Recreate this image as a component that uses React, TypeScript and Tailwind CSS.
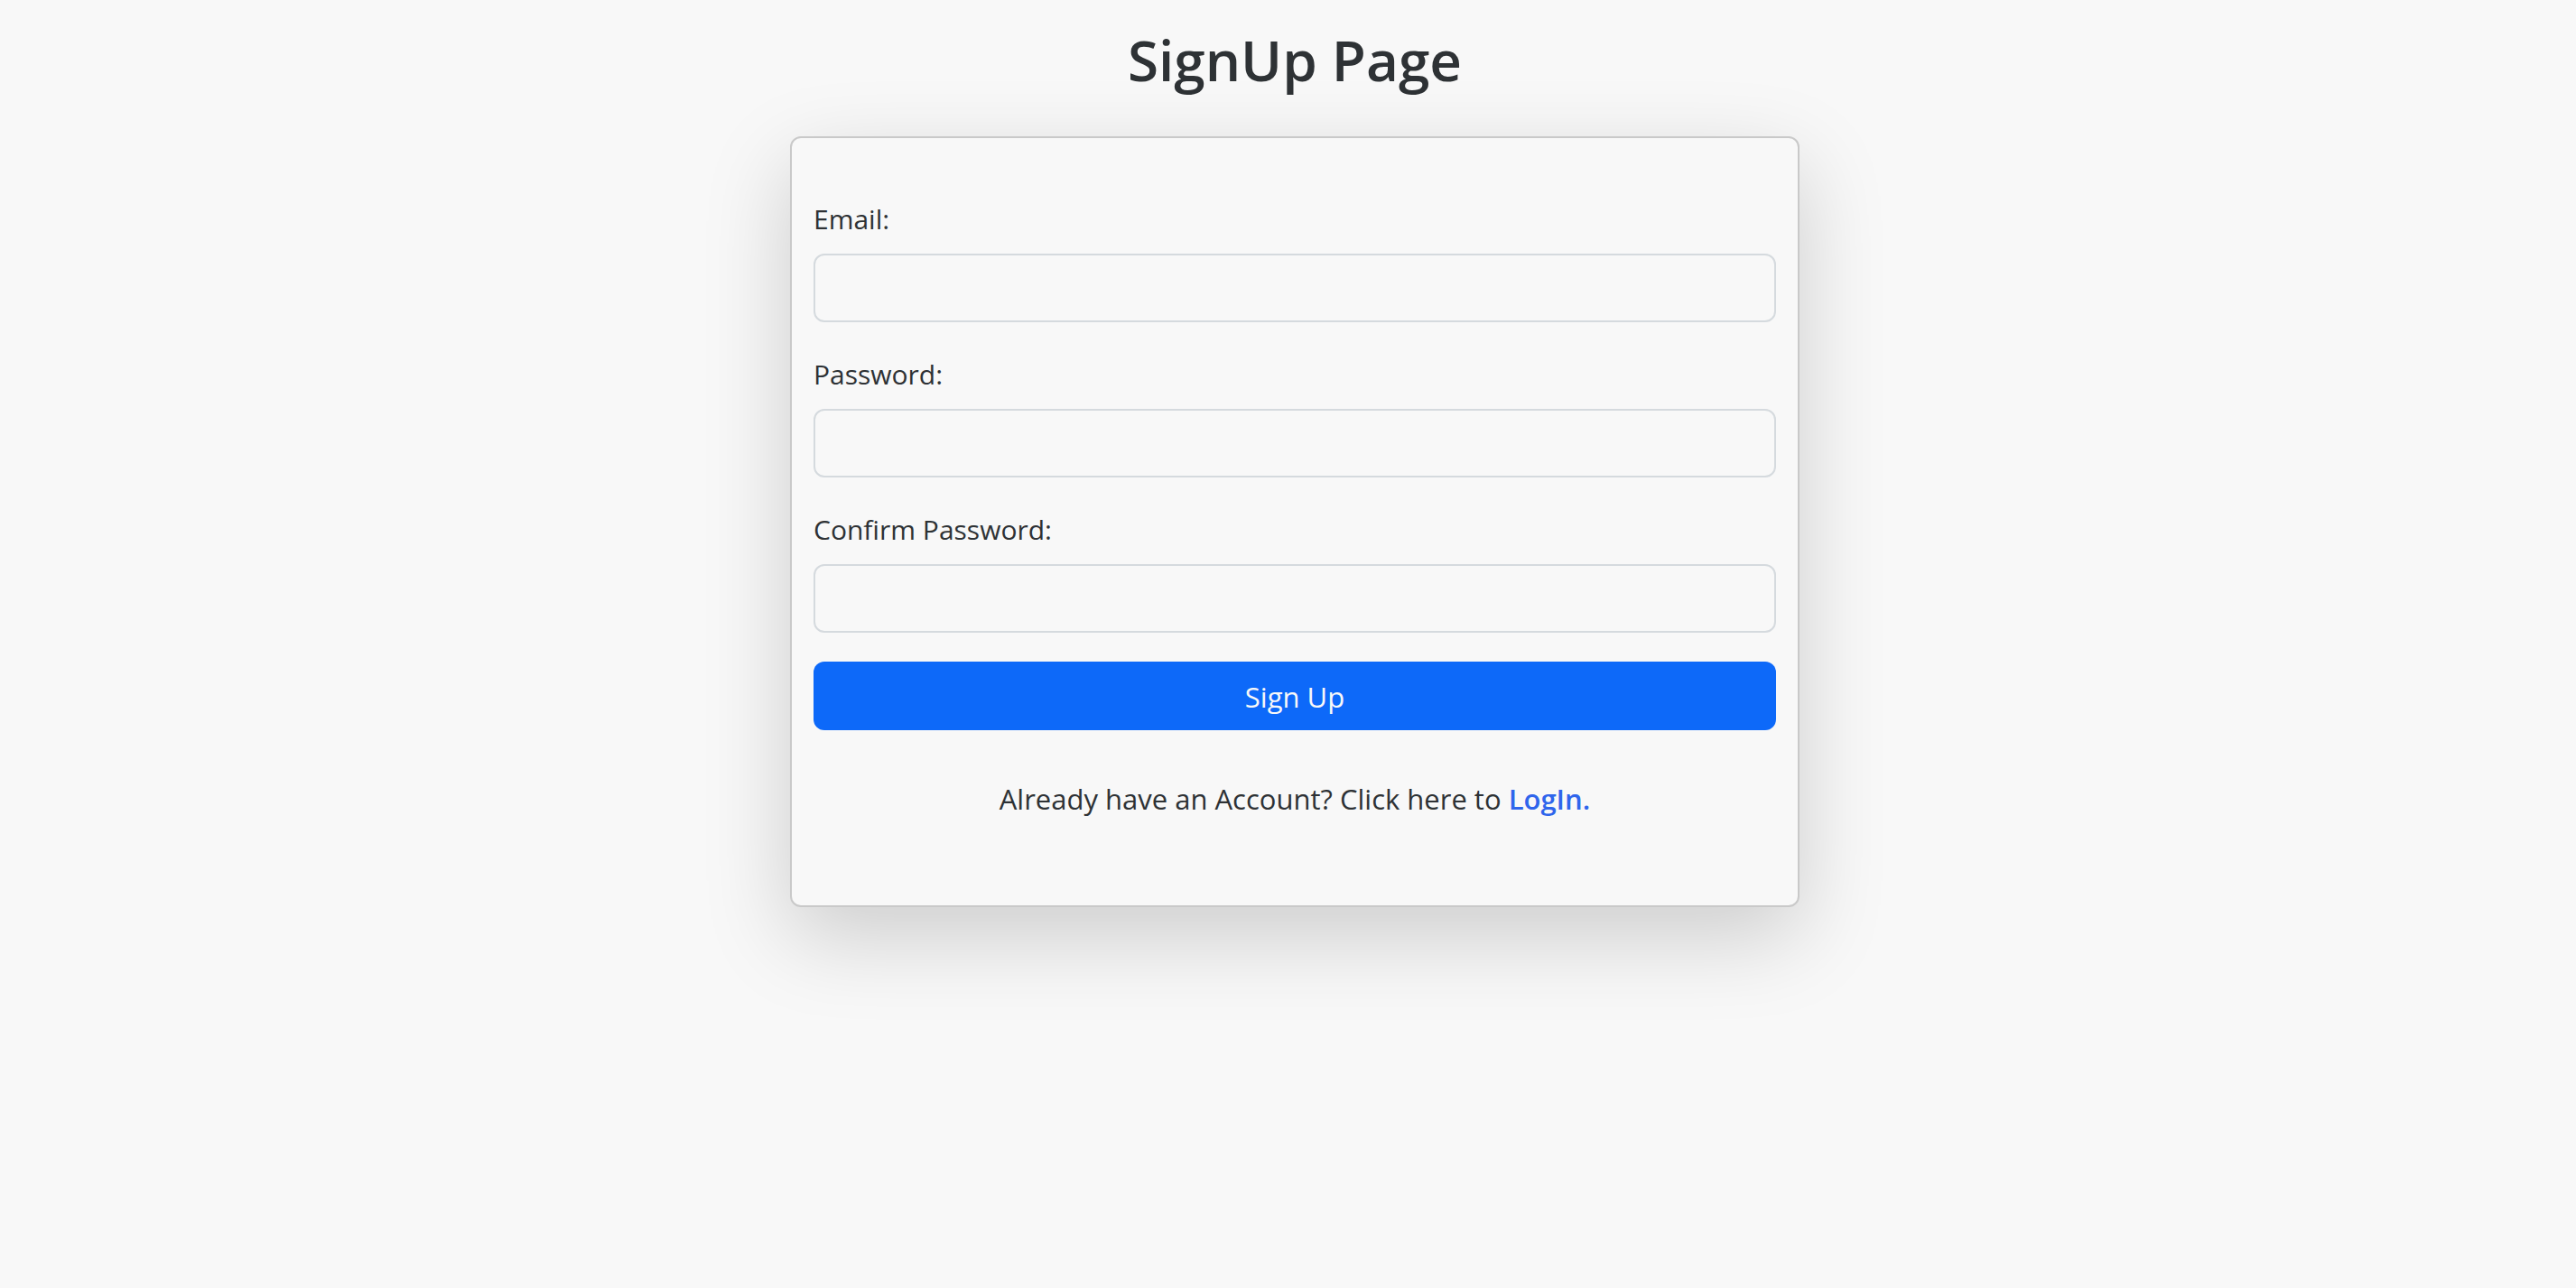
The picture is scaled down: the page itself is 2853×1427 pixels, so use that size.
const fields = [
  { id: "email", label: "Email:", type: "email" },
  { id: "password", label: "Password:", type: "password" },
  { id: "confirm-password", label: "Confirm Password:", type: "password" },
];

export default function App() {
  return (
    <main className="flex min-h-screen flex-col items-center bg-[#f8f8f8] pl-[15px] font-['Open_Sans',sans-serif] text-[31px] leading-12 text-[#2e3235]">
      <h1 className="mt-[26px] mb-[45px] text-[62px] leading-20 font-semibold">SignUp Page</h1>
      <form
        className="w-full max-w-[1118px] rounded-xl border-2 border-[#c9c9c9] bg-[#f8f8f8] px-6 pt-[66px] pb-[94px] shadow-[0_32px_96px_rgba(0,0,0,0.175)]"
        onSubmit={(event) => event.preventDefault()}
      >
        {fields.map((field, index) => (
          <div key={field.id} className={index < fields.length - 1 ? "mb-[34px]" : "mb-8"}>
            <label htmlFor={field.id} className="mb-[14px] block text-[30px]">
              {field.label}
            </label>
            <input
              id={field.id}
              type={field.type}
              className="block h-19 w-full rounded-xl border-2 border-[#d5dade] bg-transparent px-6"
            />
          </div>
        ))}
        <button type="submit" className="block h-19 w-full rounded-xl bg-[#0d69f9] pt-0.5 text-[#f8f8f8]">
          Sign Up
        </button>
        <p className="mt-[52px] text-center">
          Already have an Account? Click here to{" "}
          <a href="#login" className="font-semibold text-[#2f65ec]">
            LogIn.
          </a>
        </p>
      </form>
    </main>
  );
}
